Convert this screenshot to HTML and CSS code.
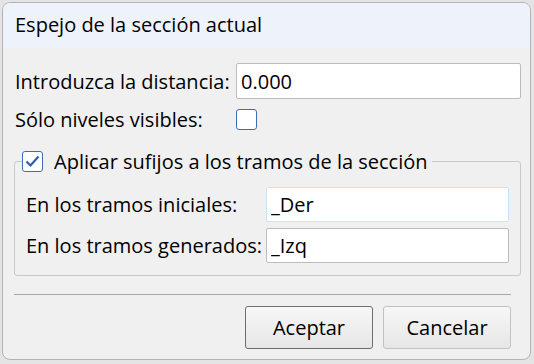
FILE: index.html
```html
<!DOCTYPE html>
<html lang="es">
<head>
    <meta charset="UTF-8">
    <title>Espejo de la sección actual</title>
    <link rel="stylesheet" href="styles.css">
</head>
<body>
    <div class="window">
        <div class="titlebar">Espejo de la sección actual</div>
        <div class="content">
            <div class="row">
                <label class="label-main" for="distancia">Introduzca la distancia:</label>
                <input type="text" id="distancia" class="field field-wide" value="0.000">
            </div>
            <div class="row row-check">
                <span class="label-main">Sólo niveles visibles:</span>
                <span class="check"></span>
            </div>

            <fieldset class="group">
                <legend>
                    <span class="check checked">
                        <svg width="15" height="13" viewBox="0 0 15 13"><path d="M1.5 6.5 L5.5 10.5 L13.5 1.5" fill="none" stroke="#2a5fae" stroke-width="2.2"/></svg>
                    </span>
                    <span class="legend-text">Aplicar sufijos a los tramos de la sección</span>
                </legend>
                <div class="row row-inner">
                    <label class="label-inner" for="iniciales">En los tramos iniciales:</label>
                    <input type="text" id="iniciales" class="field field-focus" value="_Der">
                </div>
                <div class="row row-inner">
                    <label class="label-inner" for="generados">En los tramos generados:</label>
                    <input type="text" id="generados" class="field" value="_Izq">
                </div>
            </fieldset>

            <div class="separator"></div>

            <div class="buttons">
                <button class="btn btn-default">Aceptar</button>
                <button class="btn">Cancelar</button>
            </div>
        </div>
    </div>
</body>
</html>
```

FILE: styles.css
```css
body {
    margin: 0;
    background-color: #e4e4e4;
    font-family: "Open Sans", "Noto Sans", sans-serif;
    font-size: 20px;
    color: #000;
}

.window {
    margin: 2px 0 0 2px;
    width: 527px;
    height: 356px;
    border: 1px solid #b4b4b4;
    border-radius: 8px;
    overflow: hidden;
    background-color: #f0f0f0;
}

.titlebar {
    height: 45px;
    line-height: 43px;
    padding-left: 12px;
    background-color: #eef2fa;
    font-size: 20px;
}

.content {
    padding: 15px 9px 0 12px;
}

.row {
    display: flex;
    align-items: center;
}

.label-main {
    width: 221px;
    white-space: nowrap;
}

.field {
    box-sizing: border-box;
    height: 36px;
    border: 1px solid #bcbcbc;
    border-radius: 2px;
    background: #fff;
    padding: 0 4px;
    font-family: inherit;
    font-size: 20px;
    color: #000;
    outline: none;
}

.field-wide {
    width: 285px;
}

.field-focus {
    border-color: #cde3f6;
}

.row-check {
    height: 34px;
    margin-top: 3px;
}

.check {
    box-sizing: border-box;
    display: inline-flex;
    align-items: center;
    justify-content: center;
    width: 21px;
    height: 21px;
    border: 1px solid #3f6db3;
    border-radius: 3px;
    background: #fff;
}

.group {
    margin: 12px 0 0 -1px;
    padding: 12px 10px 12px 11px;
    border: 1px solid #c9c9c9;
    border-radius: 3px;
}

.group legend {
    display: flex;
    align-items: center;
    padding: 0 4px 0 0;
    margin-left: -4px;
}

.legend-text {
    margin-left: 11px;
    white-space: nowrap;
}

.row-inner {
    margin-top: 6px;
}

.row-inner:first-of-type {
    margin-top: 0;
}

.label-inner {
    width: 240px;
    white-space: nowrap;
}

.row-inner .field {
    width: 243px;
    height: 35px;
}

.separator {
    height: 1px;
    background: #a8a8a8;
    margin: 18px 10px 0 -1px;
}

.buttons {
    display: flex;
    justify-content: flex-end;
    gap: 10px;
    margin: 11px 10px 0 0;
}

.btn {
    width: 128px;
    height: 43px;
    border: 1px solid #c2c2c2;
    border-radius: 3px;
    background: linear-gradient(#f7f7f7, #e6e6e6);
    font-family: inherit;
    font-size: 20px;
    color: #000;
}

.btn-default {
    border-color: #6e6e6e;
}
```
